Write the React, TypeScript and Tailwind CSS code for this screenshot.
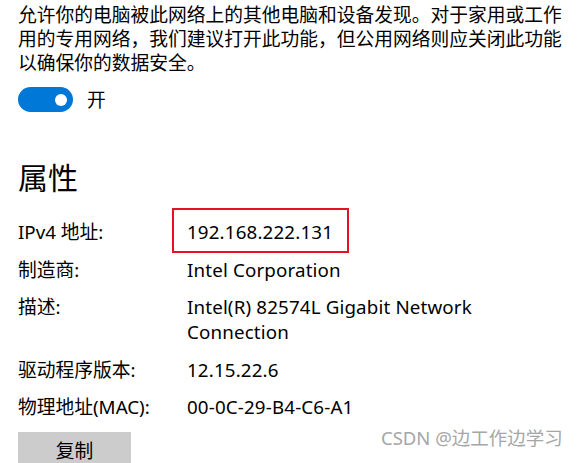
import React from 'react';

const rows: { label: string; value: React.ReactNode; boxed?: boolean }[] = [
  { label: 'IPv4 地址:', value: '192.168.222.131', boxed: true },
  { label: '制造商:', value: 'Intel Corporation' },
  {
    label: '描述:',
    value: (
      <>
        Intel(R) 82574L Gigabit Network
        <br />
        Connection
      </>
    ),
  },
  { label: '驱动程序版本:', value: '12.15.22.6' },
  { label: '物理地址(MAC):', value: '00-0C-29-B4-C6-A1' },
];

function Toggle() {
  return (
    <div className="flex h-[25px] w-[55px] items-center justify-end rounded-full bg-[#0078d7] pr-[6px]">
      <div className="h-[12px] w-[12px] rounded-full bg-white" />
    </div>
  );
}

export default function App() {
  return (
    <div className="relative h-[463px] w-[579px] overflow-hidden bg-white text-black font-['Noto_Sans','Noto_Sans_CJK_SC',sans-serif]">
      <div className="pl-[18px] pt-[3px]">
        <p className="text-[18.75px] leading-[24px]">
          允许你的电脑被此网络上的其他电脑和设备发现。对于家用或工作
          <br />
          用的专用网络，我们建议打开此功能，但公用网络则应关闭此功能
          <br />
          以确保你的数据安全。
        </p>

        <div className="mt-[12px] flex items-center gap-[14px]">
          <Toggle />
          <span className="text-[18.75px] leading-[25px]">开</span>
        </div>

        <h2 className="mt-[46px] text-[30px] leading-[40px]">属性</h2>

        <div className="mt-[21px]">
          {rows.map((row) => (
            <div key={row.label} className="mb-[12.5px] flex text-[18.75px] leading-[25px]">
              <div className="w-[169px] shrink-0">{row.label}</div>
              <div className="relative tracking-[0.15px]">
                {row.boxed && (
                  <div className="absolute left-[-15px] top-[-11.5px] h-[45px] w-[177px] border-2 border-[#e81123]" />
                )}
                {row.value}
              </div>
            </div>
          ))}
        </div>

        <button className="mt-[1px] flex h-[40px] w-[113px] items-center justify-center bg-[#cccccc] text-[18.75px]">
          复制
        </button>
      </div>

      <div className="absolute left-[381px] top-[427px] text-[18.5px] leading-[22px] text-[#a6a6a6]">
        CSDN @边工作边学习
      </div>
    </div>
  );
}
